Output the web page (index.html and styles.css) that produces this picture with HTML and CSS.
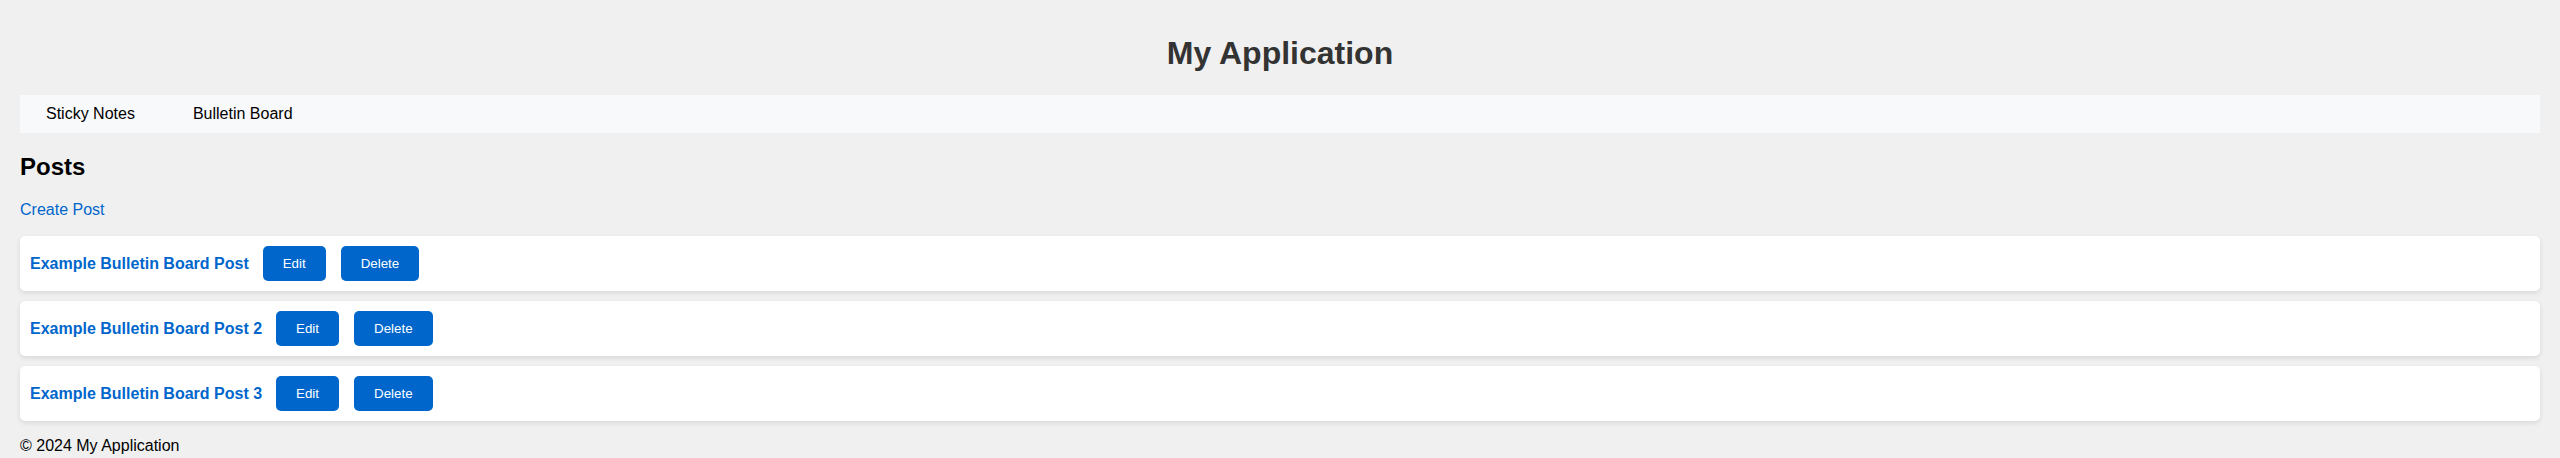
FILE: index.html
```html
<!DOCTYPE html>
<html lang="en">
<head>
<meta charset="utf-8">
<title>My Application</title>
<link rel="stylesheet" href="styles.css">
</head>
<body>
<header class="site-header">
  <h1 class="site-title">My Application</h1>
</header>
<nav class="site-nav">
  <a class="nav-link" href="#">Sticky Notes</a>
  <a class="nav-link" href="#">Bulletin Board</a>
</nav>
<main class="content">
  <h2 class="page-title">Posts</h2>
  <p class="create"><a class="create-link" href="#">Create Post</a></p>
  <ul class="post-list">
    <li class="post-card">
      <a class="post-title" href="#">Example Bulletin Board Post</a>
      <button class="btn">Edit</button>
      <button class="btn">Delete</button>
    </li>
    <li class="post-card">
      <a class="post-title" href="#">Example Bulletin Board Post 2</a>
      <button class="btn">Edit</button>
      <button class="btn">Delete</button>
    </li>
    <li class="post-card">
      <a class="post-title" href="#">Example Bulletin Board Post 3</a>
      <button class="btn">Edit</button>
      <button class="btn">Delete</button>
    </li>
  </ul>
</main>
<footer class="site-footer">© 2024 My Application</footer>
</body>
</html>
```

FILE: styles.css
```css
* { box-sizing: border-box; }

html, body {
  margin: 0;
  padding: 0;
  background: #f0f0f0;
  font-family: "Liberation Sans", Arial, sans-serif;
  font-size: 16px;
  color: #000;
}

body {
  padding: 0 20px;
}

.site-header {
  padding: 35px 0 23px;
  text-align: center;
}

.site-title {
  margin: 0;
  font-size: 32px;
  font-weight: bold;
  color: #333;
  line-height: normal;
}

.site-nav {
  display: flex;
  gap: 26px;
  background: #f8f9fa;
  padding: 0 10px;
}

.nav-link {
  padding: 10px 16px;
  color: #000;
  text-decoration: none;
  line-height: normal;
}

.content {
  display: block;
}

.page-title {
  margin: 20px 0;
  font-size: 24px;
  font-weight: bold;
  line-height: normal;
}

.create {
  margin: 0 0 17px;
}

.create-link {
  color: #0066cc;
  text-decoration: none;
}

.post-list {
  list-style: none;
  margin: 0;
  padding: 0;
}

.post-card {
  display: flex;
  align-items: center;
  background: #fff;
  border-radius: 5px;
  box-shadow: 0 2px 5px rgba(0, 0, 0, 0.1);
  padding: 10px;
  margin-bottom: 10px;
}

.post-title {
  color: #0066cc;
  font-weight: bold;
  text-decoration: none;
}

.btn {
  margin-left: 14px;
  background: #0066cc;
  color: #fff;
  border: none;
  border-radius: 5px;
  padding: 10px 20px;
  font-family: "Liberation Sans", Arial, sans-serif;
  font-size: 13.333px;
  line-height: normal;
  cursor: pointer;
}

.btn + .btn {
  margin-left: 15px;
}

.site-footer {
  padding: 6px 0 10px;
  line-height: normal;
}
```
